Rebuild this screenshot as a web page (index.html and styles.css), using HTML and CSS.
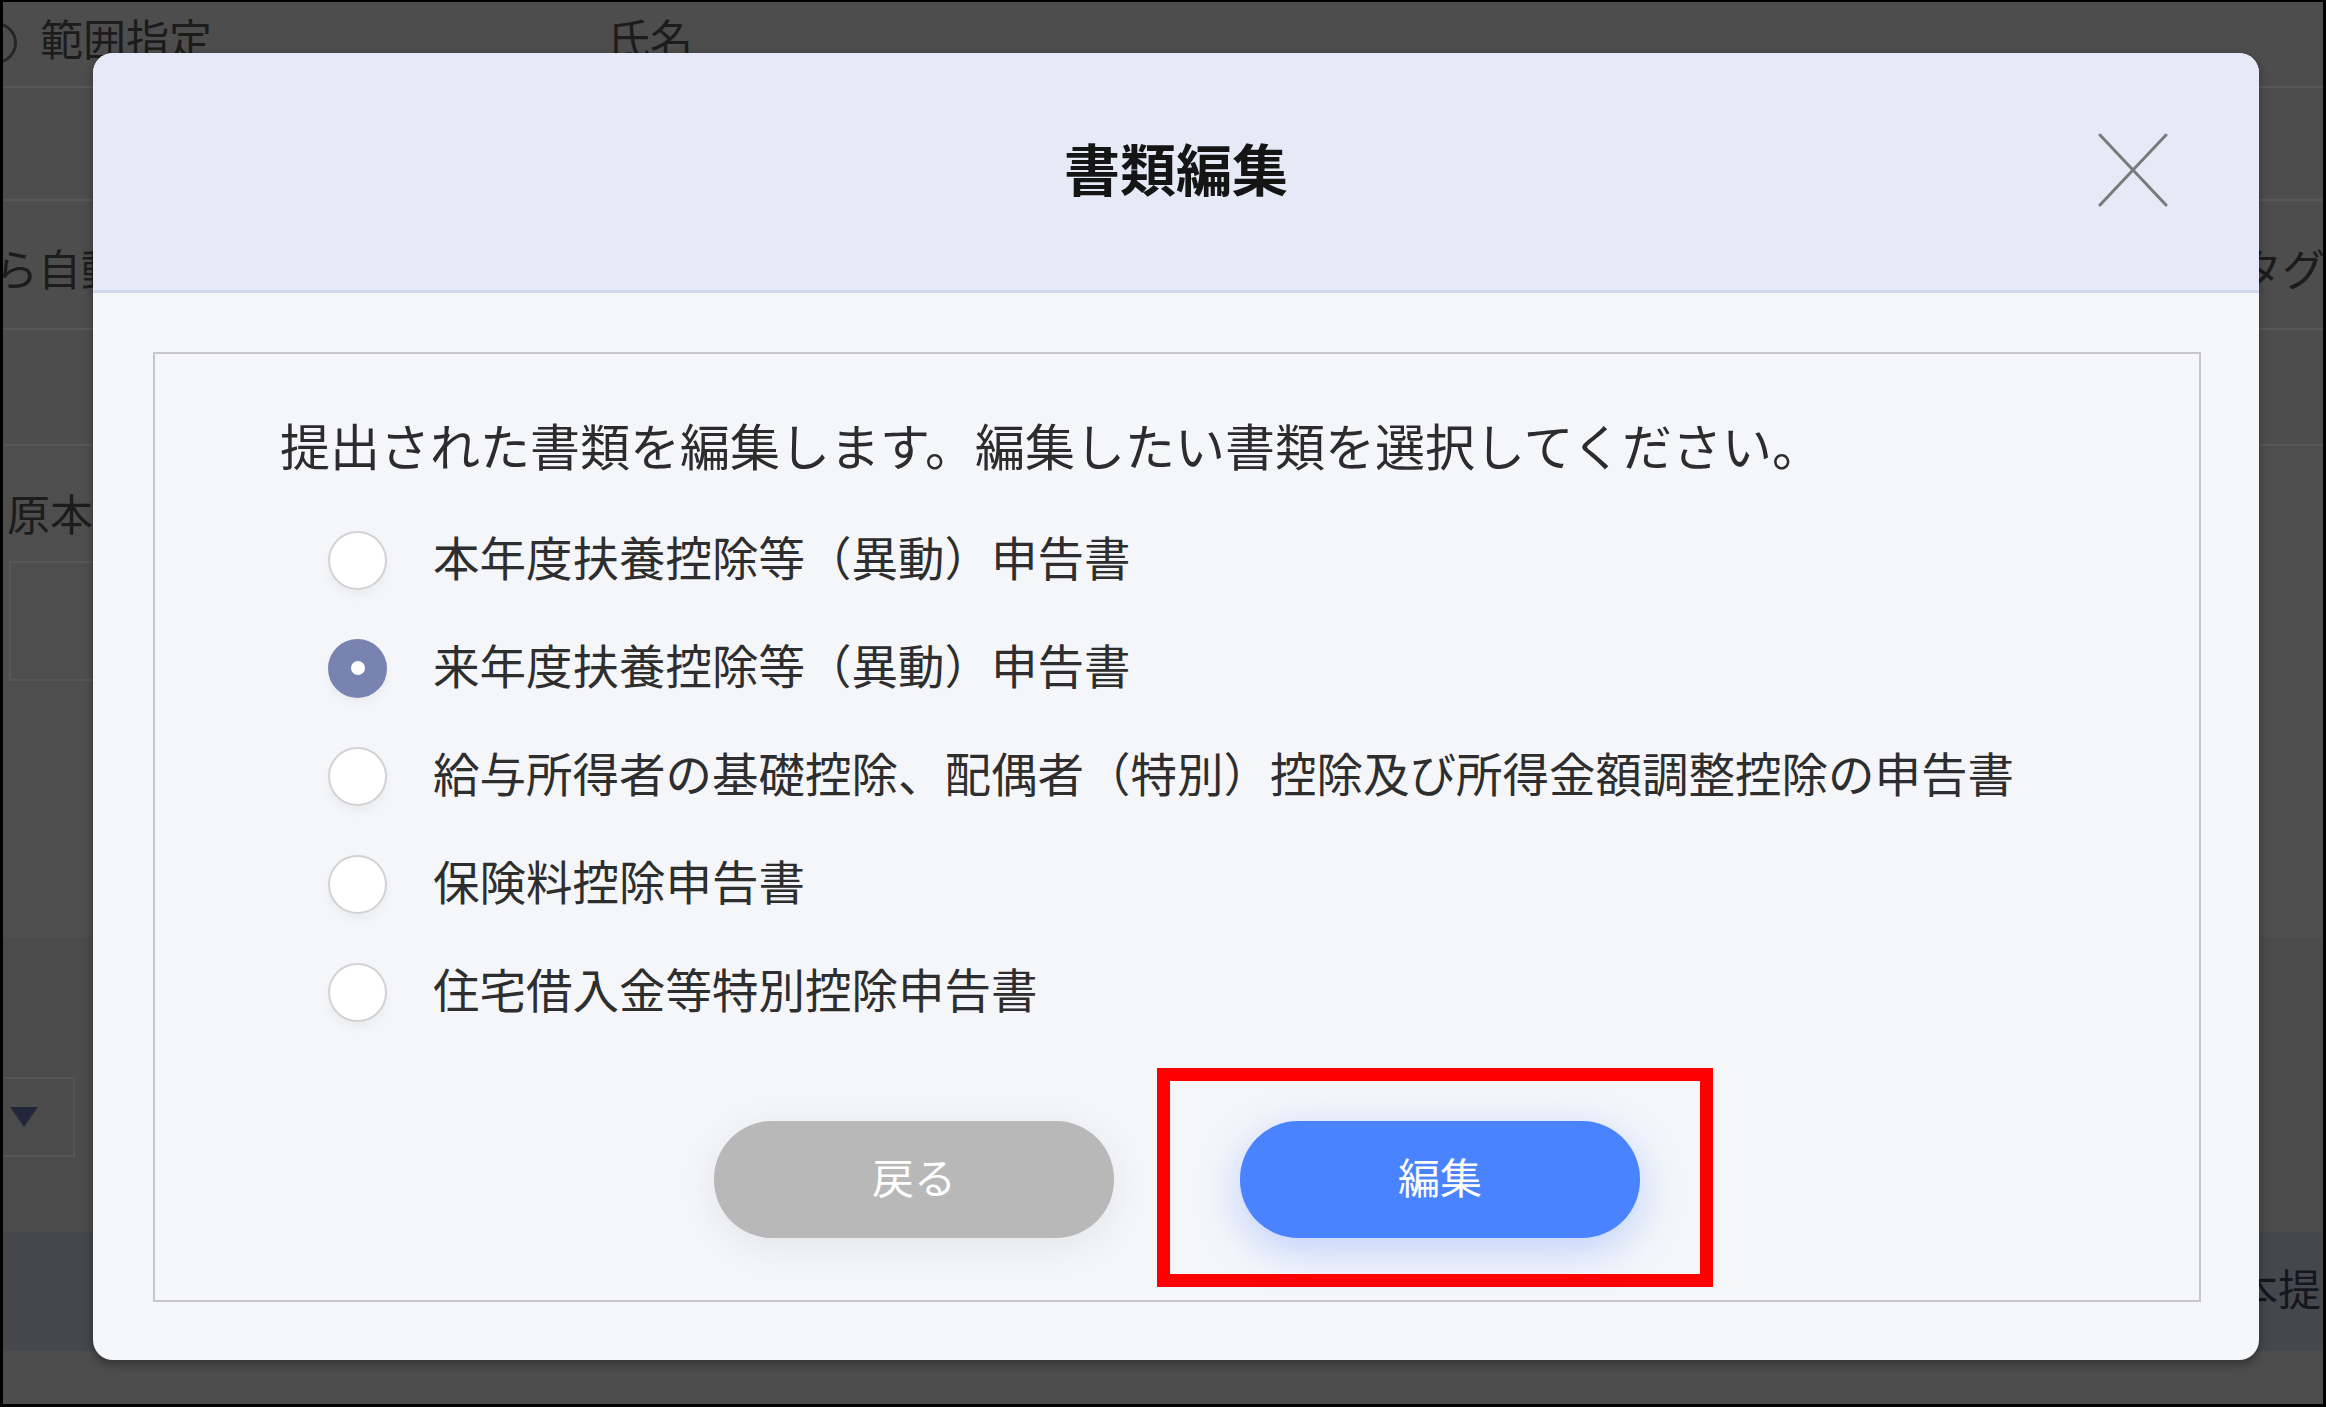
FILE: index.html
```html
<!DOCTYPE html>
<html lang="ja">
<head>
<meta charset="utf-8">
<title>書類編集</title>
<link rel="stylesheet" href="styles.css">
</head>
<body>
<div class="screen">
  <div class="page">
    <div class="row row-head">
      <span class="stub-circle"></span>
      <span class="bg-text col-range">範囲指定</span>
      <span class="bg-text col-name">氏名</span>
    </div>
    <div class="row row-2"></div>
    <div class="row row-3">
      <span class="bg-text auto">ら自動</span>
      <span class="bg-text tag">タグ</span>
    </div>
    <div class="row row-4"></div>
    <div class="row row-5">
      <span class="bg-text orig">原本</span>
      <div class="bg-input"></div>
    </div>
    <div class="row row-6">
      <div class="bg-select"><span class="caret"></span></div>
    </div>
    <div class="row row-7">
      <span class="bg-text submit">本提出</span>
    </div>
    <div class="row row-8"></div>
  </div>

  <div class="modal">
    <div class="modal-header">
      <h1 class="modal-title">書類編集</h1>
      <button class="close-btn" type="button" aria-label="閉じる">
        <svg width="70" height="74" viewBox="0 0 70 74" fill="none" stroke="#7a7a7a" stroke-width="3" stroke-linecap="round">
          <line x1="2" y1="2" x2="68" y2="72"/>
          <line x1="68" y1="2" x2="2" y2="72"/>
        </svg>
      </button>
    </div>
    <div class="modal-body">
      <div class="panel">
        <p class="intro">提出された書類を編集します。編集したい書類を選択してください。</p>
        <ul class="options">
          <li class="option"><span class="radio"></span><span class="label">本年度扶養控除等（異動）申告書</span></li>
          <li class="option"><span class="radio checked"></span><span class="label">来年度扶養控除等（異動）申告書</span></li>
          <li class="option"><span class="radio"></span><span class="label">給与所得者の基礎控除、配偶者（特別）控除及び所得金額調整控除の申告書</span></li>
          <li class="option"><span class="radio"></span><span class="label">保険料控除申告書</span></li>
          <li class="option"><span class="radio"></span><span class="label">住宅借入金等特別控除申告書</span></li>
        </ul>
        <div class="actions">
          <button class="btn btn-back" type="button">戻る</button>
          <div class="highlight-wrap">
            <button class="btn btn-edit" type="button">編集</button>
            <span class="highlight"></span>
          </div>
        </div>
      </div>
    </div>
  </div>
</div>
</body>
</html>
```

FILE: styles.css
```css
html, body {
  margin: 0;
  padding: 0;
  background: #000;
}

.screen {
  position: relative;
  width: 2326px;
  height: 1407px;
  box-sizing: border-box;
  border: 3px solid #000;
  border-top-width: 2px;
  overflow: hidden;
  background: #4d4d4d;
  font-family: "Noto Sans CJK JP", "Noto Sans", sans-serif;
}

/* ---------- dimmed page behind the dialog ---------- */
.page {
  display: flex;
  flex-direction: column;
  height: 100%;
}

.row {
  display: flex;
  align-items: flex-start;
  box-sizing: border-box;
  border-bottom: 2px solid #575757;
  flex: none;
}

.bg-text {
  font-size: 43px;
  line-height: 43px;
  color: #1c1c1c;
  white-space: nowrap;
}

.row-head {
  height: 86px;
  padding-top: 14px;
}

.stub-circle {
  width: 36px;
  height: 36px;
  margin-left: -28px;
  margin-top: 6px;
  border: 3px solid #262626;
  border-radius: 50%;
  flex: none;
}

.col-range {
  margin-left: 23px;
}

.col-name {
  margin-left: 395px;
}

.row-2 {
  height: 113px;
}

.row-3 {
  height: 129px;
  padding-top: 45px;
  justify-content: space-between;
}

.auto {
  margin-left: -8px;
}

.tag {
  margin-right: -2px;
}

.row-4 {
  height: 116px;
}

.row-5 {
  height: 492px;
  border-bottom: none;
  flex-direction: column;
  padding-top: 45px;
  background: #4e4e4e;
}

.orig {
  margin-left: 4px;
}

.bg-input {
  margin-top: 27px;
  margin-left: 6px;
  width: 300px;
  height: 120px;
  box-sizing: border-box;
  border: 2px solid #575757;
}

.row-6 {
  height: 294px;
  border-bottom: none;
  background: #4b4b4b;
  padding-top: 139px;
}

.bg-select {
  width: 72px;
  height: 80px;
  box-sizing: border-box;
  border: 2px solid #555;
  border-left: none;
  display: flex;
  align-items: center;
  padding-left: 7px;
}

.caret {
  width: 0;
  height: 0;
  border-left: 14px solid transparent;
  border-right: 14px solid transparent;
  border-top: 20px solid #23273a;
}

.row-7 {
  height: 119px;
  border-bottom: none;
  background: #45474c;
  justify-content: flex-end;
  padding-top: 34px;
}

.submit {
  margin-right: -41px;
  color: #15171f;
}

.row-8 {
  flex: 1;
  border-bottom: none;
  background: #4d4d4d;
}

/* ---------- dialog ---------- */
.modal {
  position: absolute;
  left: 90px;
  top: 51px;
  width: 2166px;
  height: 1307px;
  border-radius: 20px;
  overflow: hidden;
  background: #f5f6fa;
  box-shadow: 0 4px 10px rgba(0, 0, 0, 0.35);
  display: flex;
  flex-direction: column;
}

.modal-header {
  position: relative;
  height: 237px;
  flex: none;
  background: #e6e9f6;
  border-bottom: 3px solid #d4d8ee;
  display: flex;
  align-items: center;
  justify-content: center;
}

.modal-title {
  margin: 0 0 9px;
  font-size: 56px;
  line-height: 64px;
  font-weight: 700;
  color: #151515;
  letter-spacing: 0;
}

.close-btn {
  position: absolute;
  right: 91px;
  top: 80px;
  width: 70px;
  height: 74px;
  padding: 0;
  border: none;
  background: none;
  display: block;
}

.close-btn svg {
  display: block;
}

.modal-body {
  flex: 1;
  padding: 59px 58px 58px 60px;
  box-sizing: border-box;
  display: flex;
}

.panel {
  flex: 1;
  border: 2px solid #c7c7c7;
  box-sizing: border-box;
  padding: 60px 0 0 125px;
  display: flex;
  flex-direction: column;
}

.intro {
  margin: 0;
  font-size: 50px;
  line-height: 60px;
  color: #2c2c2c;
  white-space: nowrap;
}

.options {
  list-style: none;
  margin: 32px 0 0 48px;
  padding: 0;
}

.option {
  height: 108px;
  display: flex;
  align-items: center;
  gap: 46px;
}

.radio {
  flex: none;
  width: 59px;
  height: 59px;
  box-sizing: border-box;
  border-radius: 50%;
  background: #fff;
  border: 2px solid #d2d2d2;
  box-shadow: 0 6px 10px rgba(0, 0, 0, 0.04);
  display: flex;
  align-items: center;
  justify-content: center;
}

.radio.checked {
  background: #7983b2;
  border-color: #7983b2;
}

.radio.checked::after {
  content: "";
  width: 14px;
  height: 14px;
  border-radius: 50%;
  background: #fff;
}

.label {
  font-size: 46.5px;
  line-height: 60px;
  margin-bottom: 9px;
  color: #2e2e2e;
  white-space: nowrap;
}

.actions {
  margin-top: 75px;
  margin-left: -125px;
  display: flex;
  justify-content: center;
  gap: 126px;
}

.btn {
  width: 400px;
  height: 117px;
  border: none;
  border-radius: 58px;
  font-family: "Noto Sans CJK JP", "Noto Sans", sans-serif;
  font-size: 42px;
  color: #fff;
  padding: 0 0 8px;
  display: block;
}

.btn-back {
  background: #b8b8b8;
  box-shadow: 0 8px 40px rgba(0, 0, 0, 0.07);
}

.btn-edit {
  background: #4a83ff;
  box-shadow: 0 12px 44px rgba(74, 131, 255, 0.33);
}

.highlight-wrap {
  position: relative;
}

.highlight {
  position: absolute;
  left: -83px;
  top: -53px;
  width: 556px;
  height: 219px;
  box-sizing: border-box;
  border: 13px solid #ff0000;
  pointer-events: none;
}
```
